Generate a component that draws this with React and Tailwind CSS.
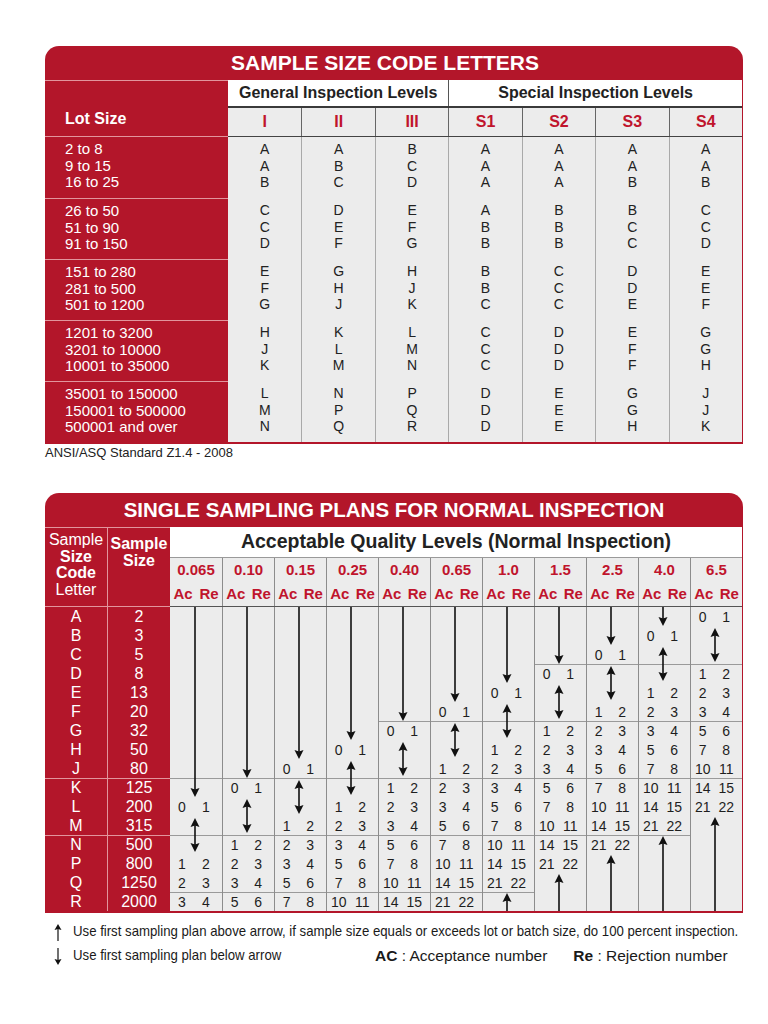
import React from "react";

const lotRows = [
  ["2 to 8", "A", "A", "B", "A", "A", "A", "A"],
  ["9 to 15", "A", "B", "C", "A", "A", "A", "A"],
  ["16 to 25", "B", "C", "D", "A", "A", "B", "B"],
  ["26 to 50", "C", "D", "E", "A", "B", "B", "C"],
  ["51 to 90", "C", "E", "F", "B", "B", "C", "C"],
  ["91 to 150", "D", "F", "G", "B", "B", "C", "D"],
  ["151 to 280", "E", "G", "H", "B", "C", "D", "E"],
  ["281 to 500", "F", "H", "J", "B", "C", "D", "E"],
  ["501 to 1200", "G", "J", "K", "C", "C", "E", "F"],
  ["1201 to 3200", "H", "K", "L", "C", "D", "E", "G"],
  ["3201 to 10000", "J", "L", "M", "C", "D", "F", "G"],
  ["10001 to 35000", "K", "M", "N", "C", "D", "F", "H"],
  ["35001 to 150000", "L", "N", "P", "D", "E", "G", "J"],
  ["150001 to 500000", "M", "P", "Q", "D", "E", "G", "J"],
  ["500001 and over", "N", "Q", "R", "D", "E", "H", "K"],
];

const levels = ["I", "II", "III", "S1", "S2", "S3", "S4"];

const codes = ["A", "B", "C", "D", "E", "F", "G", "H", "J", "K", "L", "M", "N", "P", "Q", "R"];
const sizes = ["2", "3", "5", "8", "13", "20", "32", "50", "80", "125", "200", "315", "500", "800", "1250", "2000"];
const aqls = ["0.065", "0.10", "0.15", "0.25", "0.40", "0.65", "1.0", "1.5", "2.5", "4.0", "6.5"];
const plans = [["1", "2"], ["2", "3"], ["3", "4"], ["5", "6"], ["7", "8"], ["10", "11"], ["14", "15"], ["21", "22"]];

// rows where a group line may be drawn (top of D, G, K, N, R)
const breaks = [3, 6, 9, 12, 15];

function groupsOf3(rows) {
  const out = [];
  for (let i = 0; i < rows.length; i += 3) out.push(rows.slice(i, i + 3));
  return out;
}

function DownHead({ x, tip }) {
  return <polygon points={`${x - 4.5},${tip - 9} ${x},${tip - 7.5} ${x + 4.5},${tip - 9} ${x},${tip}`} fill="#111" />;
}

function UpHead({ x, tip }) {
  return <polygon points={`${x - 4.5},${tip + 9} ${x},${tip + 7.5} ${x + 4.5},${tip + 9} ${x},${tip}`} fill="#111" />;
}

function CodeLetters() {
  return (
    <div className="ml-[45px] w-[698px]">
      <div className="flex h-[34px] items-center justify-center rounded-t-[14px] bg-[#b3162a] pr-[18px] text-[21px] font-bold text-white">
        SAMPLE SIZE CODE LETTERS
      </div>
      <div className="flex h-[57px]">
        <div className="flex w-[183px] items-end border-y border-[#e2959d] bg-[#b3162a] pb-[5px] pl-[20px] text-[16px] font-bold text-white">
          Lot Size
        </div>
        <div className="flex flex-1 flex-col border-r border-[#b3162a]">
          <div className="grid h-[28px] grid-cols-7 border-b-2 border-[#3a3a3a] bg-white text-[16px] font-bold text-[#222]">
            <div className="col-span-3 flex items-center justify-center">General Inspection Levels</div>
            <div className="col-span-4 flex items-center justify-center border-l border-[#555]">Special Inspection Levels</div>
          </div>
          <div className="grid h-[29px] grid-cols-7 border-b border-[#444] bg-[#ececec] text-[16px] font-bold text-[#c0142c]">
            {levels.map((l, i) => (
              <div key={l} className={`flex items-center justify-center ${i ? "border-l border-[#666]" : ""}`}>
                {l}
              </div>
            ))}
          </div>
        </div>
      </div>
      <div className="border-b-2 border-[#b3162a]">
        {groupsOf3(lotRows).map((g, gi) => (
          <div key={gi} className="flex h-[61px]">
            <div className={`w-[183px] bg-[#b3162a] pl-[20px] pt-[4px] text-[15px] leading-[16.5px] text-white ${gi ? "border-t border-[#e2959d]" : ""}`}>
              {g.map((r) => (
                <div key={r[0]}>{r[0]}</div>
              ))}
            </div>
            <div className="grid flex-1 grid-cols-7 border-r border-[#b3162a] bg-[#ececec] text-[14px] leading-[16.5px] text-[#222]">
              {levels.map((l, ci) => (
                <div key={l} className={`pt-[4px] text-center ${ci ? "border-l border-[#a9a9a9]" : ""}`}>
                  {g.map((r) => (
                    <div key={r[0]}>{r[ci + 1]}</div>
                  ))}
                </div>
              ))}
            </div>
          </div>
        ))}
      </div>
    </div>
  );
}

function AqlColumn({ i }) {
  const f = 10 - i; // first row with a plan (0 1)
  const last = Math.min(f + 10, 15);
  const x = i ? 24 : 25;
  return (
    <div className={`relative w-[52px] ${i ? "border-l border-[#8c8c8c]" : ""}`}>
      {codes.map((c, r) => {
        const line = breaks.includes(r) && (r >= f || r === 9) && r <= last + 1;
        let nums = null;
        if (r === f) nums = ["0", "1"];
        else if (r >= f + 3 && r <= last) nums = plans[r - f - 3];
        return (
          <div
            key={c}
            className={`grid h-[19px] grid-cols-2 items-center pr-[4px] text-center text-[14px] leading-none ${line ? "border-t border-[#9a9a9a]" : ""}`}
          >
            {nums && (
              <>
                <span>{nums[0]}</span>
                <span>{nums[1]}</span>
              </>
            )}
          </div>
        );
      })}
      <svg className="pointer-events-none absolute inset-0 h-full w-full">
        {f > 0 && (
          <>
            <line x1={x} x2={x} y1={0} y2={f * 19 - 6} stroke="#111" strokeWidth="1.6" />
            <DownHead x={x} tip={f * 19} />
          </>
        )}
        <line x1={x} x2={x} y1={(f + 1) * 19 + 8} y2={(f + 3) * 19 - 8} stroke="#111" strokeWidth="1.6" />
        <UpHead x={x} tip={(f + 1) * 19 + 2} />
        <DownHead x={x} tip={(f + 3) * 19 - 2} />
        {last < 15 && (
          <>
            <line x1={x} x2={x} y1={(last + 1) * 19 + 6} y2={304} stroke="#111" strokeWidth="1.6" />
            <UpHead x={x} tip={(last + 1) * 19 + 1} />
          </>
        )}
      </svg>
    </div>
  );
}

function SamplingPlans() {
  return (
    <div className="ml-[45px] mt-[32px] w-[698px]">
      <div className="flex h-[34px] items-center justify-center rounded-t-[14px] bg-[#b3162a] text-[20.5px] font-bold text-white">
        SINGLE SAMPLING PLANS FOR NORMAL INSPECTION
      </div>
      <div className="flex h-[80px]">
        <div className="w-[62px] border-y border-[#e2959d] bg-[#b3162a] pt-[4px] text-center text-[16px] leading-[16.5px] text-white">
          <div>Sample</div>
          <div className="font-bold">Size</div>
          <div className="font-bold">Code</div>
          <div>Letter</div>
        </div>
        <div className="w-[63px] border-y border-l border-[#e2959d] bg-[#b3162a] pt-[8px] text-center text-[16px] font-bold leading-[16.5px] text-white">
          <div>Sample</div>
          <div>Size</div>
        </div>
        <div className="flex flex-1 flex-col border-r border-[#b3162a]">
          <div className="flex h-[31px] items-center justify-center border-b border-[#9a9a9a] bg-white text-[19.5px] font-bold text-[#222]">
            Acceptable Quality Levels (Normal Inspection)
          </div>
          <div className="flex h-[49px] border-b border-[#555] bg-[#ececec] font-bold text-[#c0142c]">
            {aqls.map((a, i) => (
              <div key={a} className={`flex w-[52px] flex-col ${i ? "border-l border-[#8c8c8c]" : ""}`}>
                <div className="text-center text-[15px] leading-[24px]">{a}</div>
                <div className="flex justify-around text-[15px] leading-[23px]">
                  <span>Ac</span>
                  <span>Re</span>
                </div>
              </div>
            ))}
          </div>
        </div>
      </div>
      <div className="flex border-b-2 border-[#b3162a]">
        <div className="w-[62px] bg-[#b3162a] text-[16px] text-white">
          {codes.map((c, r) => (
            <div key={c} className={`flex h-[19px] items-center justify-center ${r === 9 || r === 12 ? "border-t border-[#e2959d]" : ""}`}>
              {c}
            </div>
          ))}
        </div>
        <div className="w-[63px] border-l border-[#e2959d] bg-[#b3162a] text-[16px] text-white">
          {sizes.map((s, r) => (
            <div key={s} className={`flex h-[19px] items-center justify-center ${r === 9 || r === 12 ? "border-t border-[#e2959d]" : ""}`}>
              {s}
            </div>
          ))}
        </div>
        <div className="flex flex-1 border-r border-[#b3162a] bg-[#ececec] text-[#1e1e1e]">
          {aqls.map((a, i) => (
            <AqlColumn key={a} i={i} />
          ))}
        </div>
      </div>
    </div>
  );
}

function Legend() {
  return (
    <div className="ml-[52px] mt-[7px] text-[#1a1a1a]">
      <div className="flex h-[24px] items-center">
        <svg className="shrink-0" width="12" height="17" viewBox="0 0 12 17">
          <line x1="6" x2="6" y1="5" y2="17" stroke="#111" strokeWidth="1.2" />
          <polygon points="2.5,6 6,0 9.5,6 6,5" fill="#111" />
        </svg>
        <span className="ml-[9px] shrink-0 origin-left scale-x-[0.91] whitespace-nowrap text-[14.5px]">
          Use first sampling plan above arrow, if sample size equals or exceeds lot or batch size, do 100 percent inspection.
        </span>
      </div>
      <div className="flex h-[24px] items-center">
        <div className="flex w-[323px] shrink-0 items-center">
          <svg className="shrink-0" width="12" height="17" viewBox="0 0 12 17">
            <line x1="6" x2="6" y1="0" y2="12" stroke="#111" strokeWidth="1.2" />
            <polygon points="2.5,11 6,17 9.5,11 6,12" fill="#111" />
          </svg>
          <span className="ml-[9px] origin-left scale-x-[0.91] whitespace-nowrap text-[14.5px]">
            Use first sampling plan below arrow
          </span>
        </div>
        <span className="whitespace-nowrap text-[15.5px]">
          <b>AC</b> : Acceptance number
        </span>
        <span className="ml-[26px] whitespace-nowrap text-[15.5px]">
          <b>Re</b> : Rejection number
        </span>
      </div>
    </div>
  );
}

export default function App() {
  return (
    <div className="min-h-[1024px] w-[768px] bg-white pt-[46px] font-['Liberation_Sans',Arial,sans-serif] text-[#1e1e1e]">
      <CodeLetters />
      <p className="ml-[45px] mt-[1px] text-[13px] leading-[16px] text-[#222]">ANSI/ASQ Standard Z1.4 - 2008</p>
      <SamplingPlans />
      <Legend />
    </div>
  );
}
